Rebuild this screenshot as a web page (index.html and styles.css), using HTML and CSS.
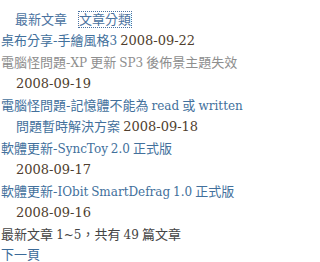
FILE: index.html
```html
<!DOCTYPE html>
<html lang="zh-Hant">
<head>
<meta charset="utf-8">
<title>最新文章</title>
<link rel="stylesheet" href="styles.css">
</head>
<body>
<div class="widget">
  <ul class="tabs">
    <li><a href="#recent" class="tab">最新文章</a></li>
    <li><a href="#cats" class="tab tab-focus">文章分類</a></li>
  </ul>
  <ul class="posts">
    <li><a href="#p1" class="post">桌布分享-手繪風格<span class="en" lang="en">3</span></a> <span class="date">2008-09-22</span></li>
    <li><a href="#p2" class="post visited">電腦怪問題-<span class="en" lang="en">XP</span> 更新 <span class="en" lang="en">SP3</span> 後佈景主題失效</a> <span class="date">2008-09-19</span></li>
    <li><a href="#p3" class="post">電腦怪問題-記憶體不能為 <span class="en" lang="en">read</span> 或 <span class="en" lang="en">written</span> 問題暫時解決方案</a> <span class="date">2008-09-18</span></li>
    <li><a href="#p4" class="post">軟體更新-<span class="en" lang="en">SyncToy 2.0</span> 正式版</a> <span class="date">2008-09-17</span></li>
    <li><a href="#p5" class="post">軟體更新-<span class="en" lang="en">IObit SmartDefrag 1.0</span> 正式版</a> <span class="date">2008-09-16</span></li>
  </ul>
  <div class="summary">最新文章 <span class="en" lang="en">1~5</span>，共有 <span class="en" lang="en">49</span> 篇文章</div>
  <div class="pager"><a href="#next" class="next">下一頁</a></div>
</div>
</body>
</html>
```
FILE: styles.css
```css
html, body {
  margin: 0;
  padding: 0;
  background: #ffffff;
}

body {
  font-family: "DejaVu Serif", "Noto Sans CJK TC", serif;
  font-size: 13px;
  color: #444444;
}

.widget {
  width: 250px;
}

.en {
  font-size: 12px;
  line-height: 1;
}

.tabs {
  list-style: none;
  margin: 0;
  padding: 10px 0 0 15px;
  display: flex;
  gap: 12px;
  height: 20px;
  line-height: 20px;
}

.tab {
  color: #4a72a0;
  text-decoration: none;
}

.tab-focus {
  outline: 1px dotted #4a72a0;
  outline-offset: 0;
}

.posts {
  list-style: none;
  margin: 0;
  padding: 0;
  line-height: 21.5px;
  word-spacing: -1px;
}

.posts li {
  padding-left: 16px;
  text-indent: -15px;
}

.post {
  color: #42709c;
  text-decoration: none;
}

.post.visited {
  color: #8e8e8e;
}

.date {
  color: #4f3e2e;
  white-space: nowrap;
  word-spacing: 0;
}

.summary {
  padding-left: 1px;
  line-height: 21.5px;
  color: #444444;
  word-spacing: -1px;
}

.pager {
  padding-left: 1px;
  line-height: 20px;
}

.next {
  color: #3b6a98;
  text-decoration: none;
}
```
